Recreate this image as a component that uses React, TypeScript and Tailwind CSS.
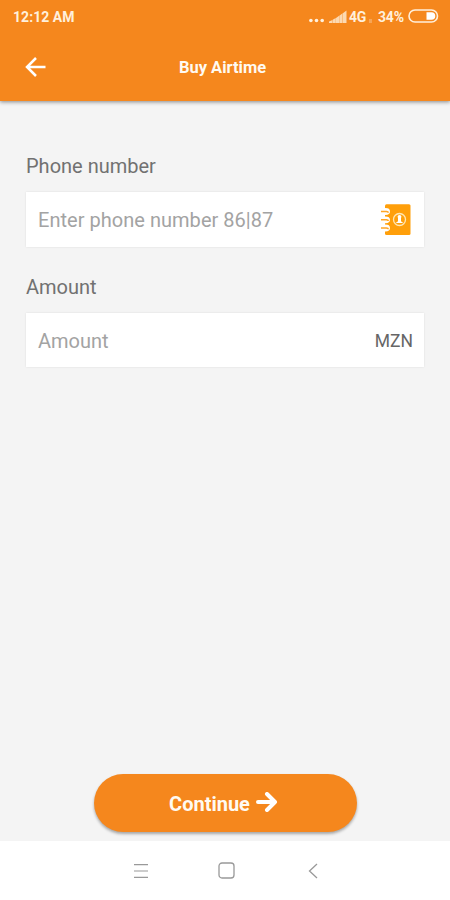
import React from "react";

function StatusBar() {
  return (
    <div className="flex h-[33px] items-center pl-[13px] pr-[11px] text-[#fff0dc]">
      <span className="w-[62px] whitespace-nowrap text-[14px] font-bold leading-none tracking-[0.05px]">12:12 AM</span>
      <svg className="ml-auto" width="40" height="16" viewBox="0 0 40 16" fill="currentColor">
        <circle cx="1.9" cy="11.500" r="1.8" />
        <circle cx="7.5" cy="11.500" r="1.8" />
        <circle cx="13.2" cy="11.500" r="1.8" />
        <g opacity=".78">
          <path d="M20 14v-1.500L23.500 11v3z" />
          <path d="M23.700 14v-3.300l3.100-1.700V14z" />
          <path d="M27 14V9l3.100-2.200V14z" />
          <path d="M30.300 14V6.700l3-2.100V14z" />
          <path d="M33.500 14V4.500L37.500 1.500V14z" />
        </g>
      </svg>
      <span className="w-[18px] text-[14px] font-bold leading-none tracking-[-0.3px]">4G</span>
      <span className="ml-[2px] mt-[9px] h-[4px] w-[3px] bg-white/25" />
      <span className="ml-[6px] w-[27px] whitespace-nowrap text-[14px] font-bold leading-none tracking-[-0.2px]">34%</span>
      <svg className="mb-px ml-[3px]" width="31" height="14" viewBox="0 0 31 14" fill="none">
        <rect x="1" y="1" width="28.500" height="12" rx="6" stroke="currentColor" strokeWidth="1.600" />
        <path d="M18.500 3.200h5a3.800 3.800 0 0 1 0 7.600h-5z" fill="#fff" />
      </svg>
    </div>
  );
}

function ContactBookIcon() {
  return (
    <svg width="32" height="32" viewBox="0 0 32 32" fill="none">
      <rect x="5" y=".3" width="25.500" height="30.700" rx="1.500" fill="#ff9f0a" />
      {[7.5, 15.8, 24].map((y) => (
        <g key={y}>
          <ellipse cx="5.500" cy={y} rx="4.500" ry="3.400" fill="#fff" />
          <path d={`M1 ${y}h5.500q1.800 0 1.800 1.200`} stroke="#ffa526" strokeWidth="1.500" />
        </g>
      ))}
      <circle cx="19.500" cy="15.500" r="6" stroke="#ffe7b5" strokeWidth="1.300" />
      <circle cx="19.500" cy="12.800" r="1.900" fill="#fff" />
      <path d="M18 13.500h3v3.800l2.300 1.700h-7.600l2.300-1.700z" fill="#fff" />
    </svg>
  );
}

export default function App() {
  return (
    <div className="flex h-[900px] w-[450px] flex-col overflow-hidden bg-[#f4f4f4] font-['Roboto','Liberation_Sans',sans-serif]">
      <header className="z-10 h-[101px] shrink-0 bg-[#f5871d] shadow-[0_1px_4px_rgba(0,0,0,0.45)]">
        <StatusBar />
        <div className="grid h-[68px] grid-cols-[1fr_auto_1fr] items-center pl-[25px] pr-[30px]">
          <svg width="22" height="20" viewBox="0 0 22 20" fill="none" stroke="#fff" strokeWidth="2.500">
            <path d="M20.500 10H2.500M11 1L2 10l9 9" />
          </svg>
          <h1 className="whitespace-nowrap pt-[3px] text-[16.5px] font-bold leading-none text-[#fffaf2]">Buy Airtime</h1>
        </div>
      </header>

      <main className="flex flex-1 flex-col px-[26px] pt-[53px]">
        <label className="text-[20px] leading-6 text-[#717171]">Phone number</label>
        <div className="mt-[14px] flex h-[55px] items-center justify-between bg-white pl-3 pr-3 shadow-[0_0_2px_rgba(0,0,0,0.1)]">
          <span className="text-[20px] leading-6 tracking-[0.03px] text-[#a3a3a3]">Enter phone number 86|87</span>
          <ContactBookIcon />
        </div>
        <label className="mt-[28px] text-[20px] leading-6 text-[#717171]">Amount</label>
        <div className="mt-[14px] flex h-[54px] items-center justify-between bg-white pl-3 pr-[11px] pt-px shadow-[0_0_2px_rgba(0,0,0,0.1)]">
          <span className="text-[20px] leading-6 text-[#a3a3a3]">Amount</span>
          <span className="text-[17.5px] leading-6 text-[#666]">MZN</span>
        </div>
        <button className="mb-[9px] ml-[68px] mt-auto flex h-[58px] w-[263px] items-center justify-center rounded-full bg-[#f5871d] pr-[4px] text-[#fffaf2] shadow-[0_2px_3px_rgba(0,0,0,0.32)]">
          <span className="pt-px text-[20px] font-bold leading-none">Continue</span>
          <svg className="mb-[2px] ml-[6px]" width="22" height="20" viewBox="0 0 22 20" fill="none" stroke="#fff" strokeWidth="4" strokeLinecap="round">
            <path d="M2 10h17M11 2l8 8-8 8" strokeLinejoin="round" />
          </svg>
        </button>
      </main>

      <nav className="flex h-[59px] shrink-0 items-center bg-white pl-[133px] text-[#999]">
        <svg width="16" height="16" viewBox="0 0 16 16" stroke="currentColor" strokeWidth="1.200">
          <path d="M1 1.700h14M1 8h14M1 14.300h14" />
        </svg>
        <svg className="ml-[69px]" width="17" height="17" viewBox="0 0 17 17" fill="none" stroke="currentColor" strokeWidth="1.300">
          <rect x="1" y="1" width="15" height="15" rx="3" />
        </svg>
        <svg className="ml-[73px]" width="10" height="16" viewBox="0 0 10 16" fill="none" stroke="currentColor" strokeWidth="1.300">
          <path d="M9 1L1.500 8 9 15" />
        </svg>
      </nav>
    </div>
  );
}
